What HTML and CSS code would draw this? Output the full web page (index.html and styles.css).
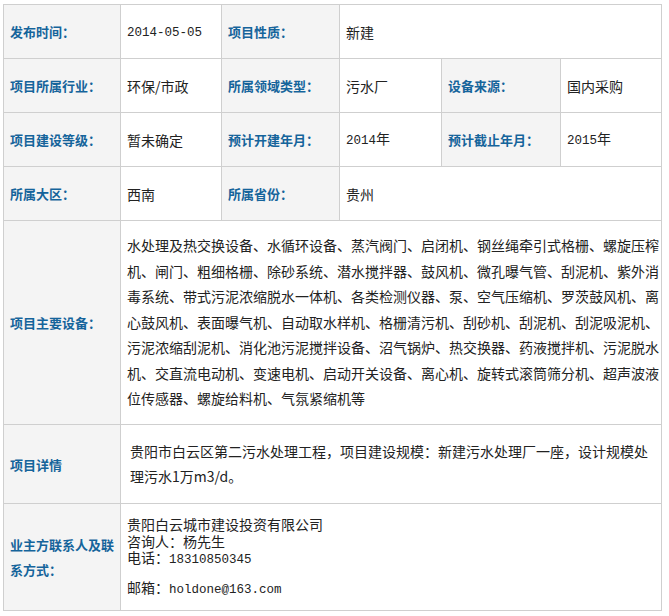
FILE: index.html
```html
<!DOCTYPE html>
<html lang="zh-CN">
<head>
<meta charset="utf-8">
<title>项目信息</title>
<link rel="stylesheet" href="styles.css">
</head>
<body>
<table class="info">
  <colgroup>
    <col class="c1"><col class="c2"><col class="c3"><col class="c4"><col class="c5"><col class="c6">
  </colgroup>
  <tr class="r-std">
    <th>发布时间：</th>
    <td><span class="mono">2014-05-05</span></td>
    <th>项目性质：</th>
    <td colspan="3">新建</td>
  </tr>
  <tr class="r-std">
    <th>项目所属行业：</th>
    <td>环保/市政</td>
    <th>所属领域类型：</th>
    <td>污水厂</td>
    <th>设备来源：</th>
    <td>国内采购</td>
  </tr>
  <tr class="r-std">
    <th>项目建设等级：</th>
    <td>暂未确定</td>
    <th>预计开建年月：</th>
    <td><span class="mono">2014</span>年</td>
    <th>预计截止年月：</th>
    <td><span class="mono">2015</span>年</td>
  </tr>
  <tr class="r-std">
    <th>所属大区：</th>
    <td>西南</td>
    <th>所属省份：</th>
    <td colspan="3" class="plain">贵州</td>
  </tr>
  <tr class="r-equip">
    <th>项目主要设备：</th>
    <td colspan="5" class="equip">水处理及热交换设备、水循环设备、蒸汽阀门、启闭机、钢丝绳牵引式格栅、螺旋压榨机、闸门、粗细格栅、除砂系统、潜水搅拌器、鼓风机、微孔曝气管、刮泥机、紫外消毒系统、带式污泥浓缩脱水一体机、各类检测仪器、泵、空气压缩机、罗茨鼓风机、离心鼓风机、表面曝气机、自动取水样机、格栅清污机、刮砂机、刮泥机、刮泥吸泥机、污泥浓缩刮泥机、消化池污泥搅拌设备、沼气锅炉、热交换器、药液搅拌机、污泥脱水机、交直流电动机、变速电机、启动开关设备、离心机、旋转式滚筒筛分机、超声波液位传感器、螺旋给料机、气氛紧缩机等</td>
  </tr>
  <tr class="r-detail">
    <th>项目详情</th>
    <td colspan="5" class="detail">贵阳市白云区第二污水处理工程，项目建设规模：新建污水处理厂一座，设计规模处理污水1万m3/d。</td>
  </tr>
  <tr class="r-contact">
    <th class="wrap">业主方联系人及联系方式：</th>
    <td colspan="5" class="contact">
      <div class="lines">
        <div class="line">贵阳白云城市建设投资有限公司</div>
        <div class="line">咨询人：杨先生</div>
        <div class="line">电话：<span class="mono">18310850345</span></div>
      </div>
      <div class="mail">邮箱：<span class="mono">holdone@163.com</span></div>
    </td>
  </tr>
</table>
</body>
</html>
```

FILE: styles.css
```css
html, body {
  margin: 0;
  padding: 0;
  background: #ffffff;
}

body {
  font-family: "Noto Sans CJK SC", "Noto Sans", sans-serif;
  color: #222222;
}

.info {
  margin: 4px 0 0 3px;
  width: 659px;
  border-collapse: collapse;
  table-layout: fixed;
}

.c1 { width: 117px; }
.c2 { width: 101px; }
.c3 { width: 118px; }
.c4 { width: 102px; }
.c5 { width: 119px; }
.c6 { width: 101px; }

.info th,
.info td {
  border: 1px solid #cfcfcf;
  vertical-align: middle;
  text-align: left;
  padding: 0 0 0 6px;
}

.info th {
  background: #f4f4f4;
  color: #15649b;
  font-size: 13px;
  font-weight: bold;
  line-height: 25px;
}

.info td {
  background: #ffffff;
  font-size: 14px;
  line-height: 20px;
  color: #222222;
}

.info td.plain {
  color: #222222;
}

.mono {
  font-family: "Liberation Mono", "DejaVu Sans Mono", monospace;
  font-size: 12.5px;
}

.r-std { height: 54px; }
.r-equip { height: 204px; }
.r-detail { height: 79px; }
.r-contact { height: 107px; }

.info td.equip {
  line-height: 25.5px;
  padding: 0 0 0 6px;
}

.info td.detail {
  line-height: 25px;
  padding: 0 9px 0 9px;
}

.info td.contact {
  line-height: 16.5px;
}

.line {
  height: 16.5px;
}

.mail {
  margin-top: 13px;
}
```
